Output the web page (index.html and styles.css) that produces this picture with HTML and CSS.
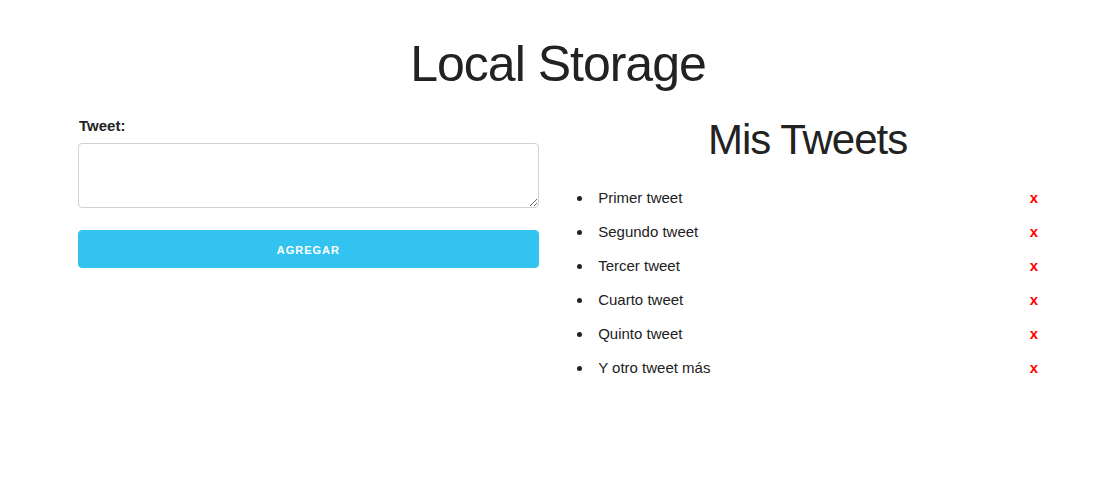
FILE: index.html
```html
<!DOCTYPE html>
<html lang="es">
<head>
<meta charset="utf-8">
<title>Local Storage</title>
<link rel="stylesheet" href="styles.css">
</head>
<body>
<div class="container">
  <h1 class="title">Local Storage</h1>
  <div class="row">
    <div class="column">
      <form class="form">
        <label class="label" for="tweet">Tweet:</label>
        <textarea id="tweet" class="textarea"></textarea>
        <button type="button" class="button-primary">Agregar</button>
      </form>
    </div>
    <div class="column">
      <h2 class="subtitle">Mis Tweets</h2>
      <ul class="tweet-list">
        <li class="tweet">Primer tweet<a class="borrar-tweet">x</a></li>
        <li class="tweet">Segundo tweet<a class="borrar-tweet">x</a></li>
        <li class="tweet">Tercer tweet<a class="borrar-tweet">x</a></li>
        <li class="tweet">Cuarto tweet<a class="borrar-tweet">x</a></li>
        <li class="tweet">Quinto tweet<a class="borrar-tweet">x</a></li>
        <li class="tweet">Y otro tweet más<a class="borrar-tweet">x</a></li>
      </ul>
    </div>
  </div>
</div>
</body>
</html>
```
FILE: styles.css
```css
html, body {
  margin: 0;
  padding: 0;
  background: #fff;
}
body {
  font-family: "Liberation Sans", Arial, Helvetica, sans-serif;
  font-size: 15px;
  line-height: 1.6;
  color: #222;
}
.container {
  width: 960px;
  margin: 0 0 0 78px;
  padding-top: 34px;
}
.title {
  margin: 0 0 20px;
  font-size: 50px;
  font-weight: 300;
  line-height: 1.2;
  letter-spacing: -1px;
  text-align: center;
}
.row {
  display: grid;
  grid-template-columns: 1fr 1fr;
  column-gap: 38.4px;
}
.form {
  margin: 0;
}
.label {
  display: block;
  margin-bottom: 5px;
  padding-left: 1px;
  font-weight: 600;
}
.textarea {
  display: block;
  box-sizing: border-box;
  width: 100%;
  height: 65px;
  min-height: 65px;
  padding: 6px 10px;
  margin: 0 0 22px;
  border: 1px solid #D1D1D1;
  border-radius: 4px;
  background: #fff;
  font-family: inherit;
  font-size: 15px;
}
.button-primary {
  display: block;
  box-sizing: border-box;
  width: 100%;
  height: 38px;
  padding: 0 30px;
  border: 1px solid #33C3F0;
  border-radius: 4px;
  background: #33C3F0;
  color: #fff;
  font-family: inherit;
  font-size: 11px;
  font-weight: 600;
  line-height: 38px;
  letter-spacing: 1px;
  text-transform: uppercase;
  text-align: center;
  cursor: pointer;
}
.subtitle {
  margin: 0 0 19px;
  font-size: 42px;
  font-weight: 300;
  line-height: 1.25;
  letter-spacing: -1px;
  text-align: center;
}
.tweet-list {
  margin: 0;
  padding: 0;
  list-style: disc inside;
}
.tweet {
  margin-bottom: 10px;
}
.borrar-tweet {
  float: right;
  color: red;
  font-weight: bold;
  cursor: pointer;
}
```
